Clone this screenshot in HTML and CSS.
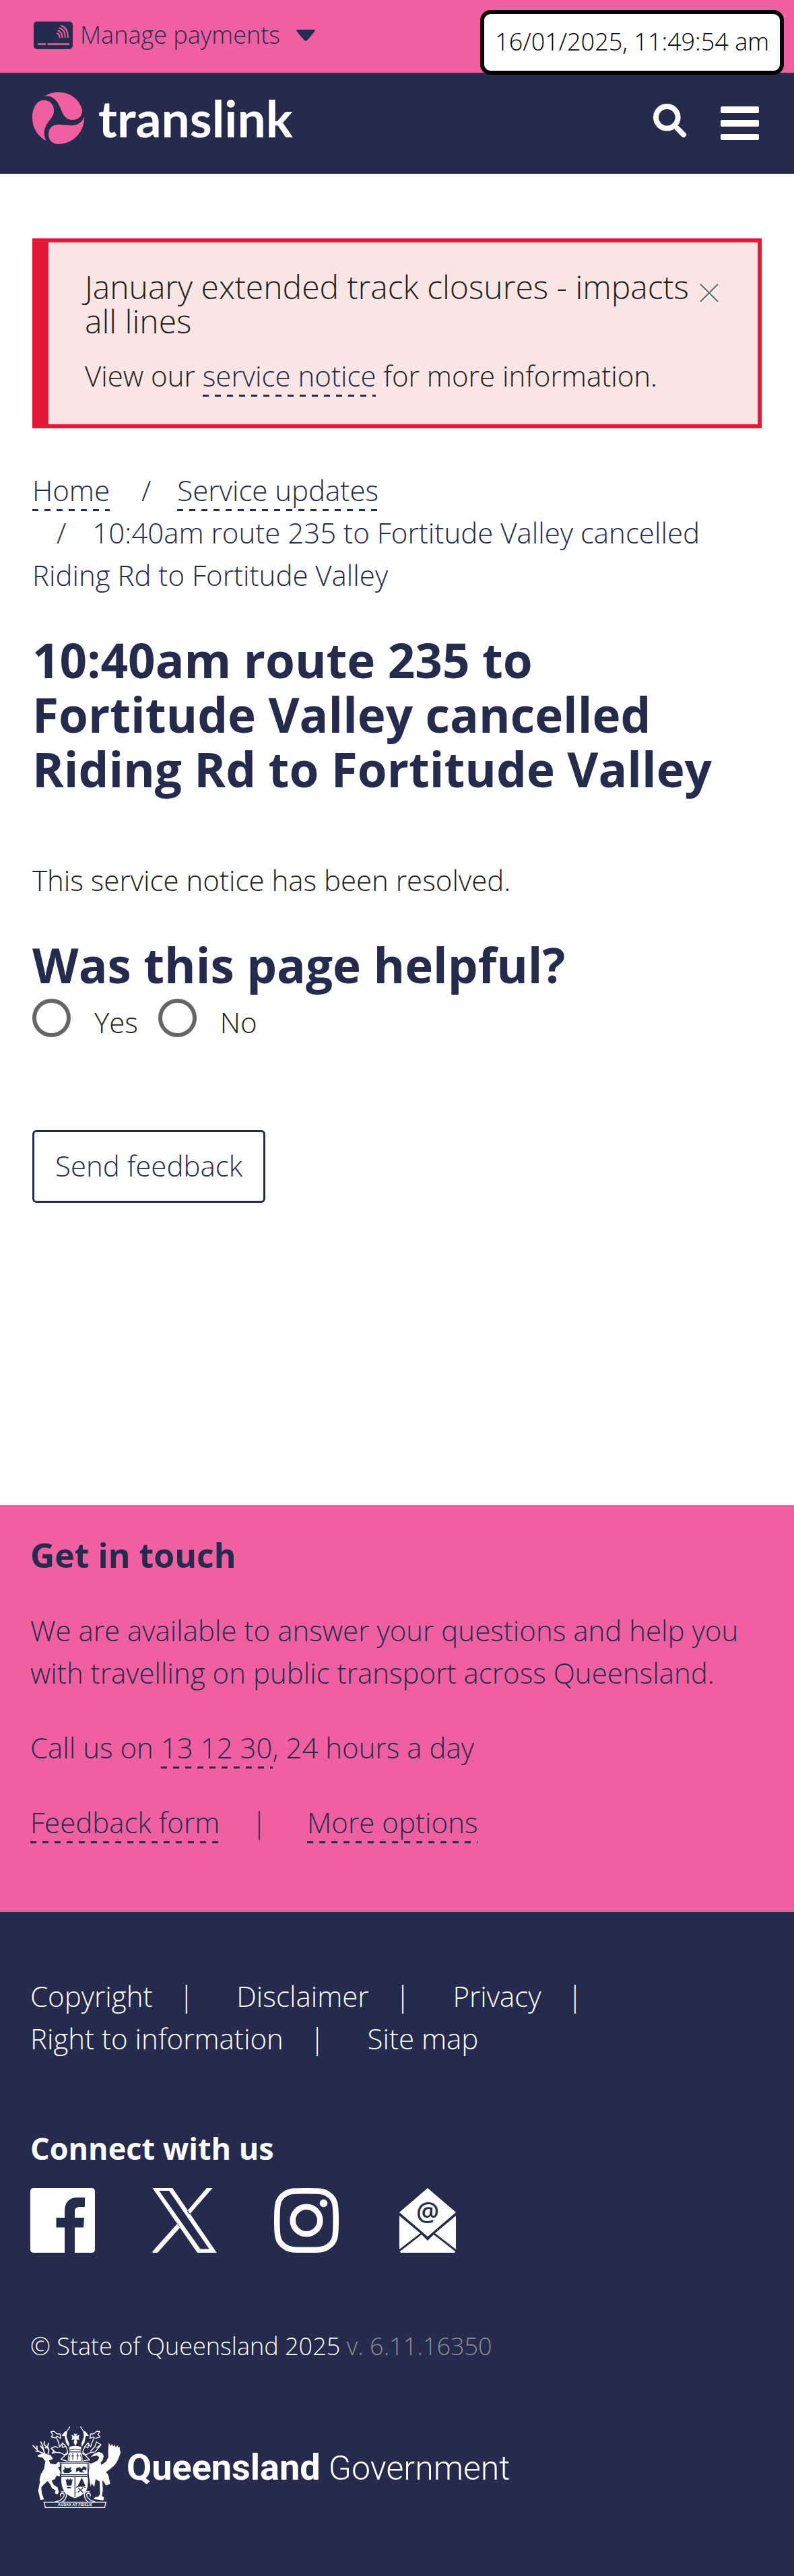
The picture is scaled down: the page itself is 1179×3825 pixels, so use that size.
FILE: index.html
```
<!DOCTYPE html>
<html lang="en-AU">
<head>
<meta charset="utf-8">
<meta name="viewport" content="width=device-width, initial-scale=1">
<title>10:40am route 235 to Fortitude Valley cancelled | Translink</title>
<link rel="stylesheet" href="styles.css">
</head>
<body>
<div class="topbar">
  <button type="button" class="payments" aria-haspopup="true">
    <svg class="payments-card" viewBox="0 0 58 41" aria-hidden="true">
      <rect width="58" height="41" rx="5" fill="#252b4d"/>
      <g fill="none" stroke="#f060a1" stroke-width="2" stroke-linecap="round">
        <path d="M35 17.5q3.5 1.5 3.5 6M36.5 13.5q6 2.5 6 10M38.5 9.5q8.5 3.5 8.5 14M41 6q10 4 10 17.5"/>
        <path stroke-width="2.5" d="M7 33.5h10M21.5 33.5h30.5"/>
      </g>
    </svg>
    <span>Manage payments</span>
    <svg class="payments-caret" viewBox="0 0 28 17" aria-hidden="true"><path d="M2 0h24q3 0 1 3L16 16q-2 1.5-4 0L1 3Q-1 0 2 0z" fill="#252b4d"/></svg>
  </button>
  <time class="timestamp" datetime="2025-01-16T11:49:54">16/01/2025, 11:49:54 am</time>
</div>

<header class="site-header">
  <a class="brand" href="#">
    <svg class="brand-mark" viewBox="0 0 77 77" aria-hidden="true">
      <g fill="#f060a1">
        <path d="M18 6.3C24 1.5 31 0 39 0C57 0 70 11 74 26C74.5 36 68 41 59.500 41C52 41 48 37 45 31C41 22 39 16 34 11C29 6.500 25 5 18 6.300z"/>
        <path d="M17 11.700C26 11.700 32 18 32 27C32 34 29 37 24.500 43C17 53 15.500 60 20.500 72.300C8 65 0 53 0 38C0 24 6 11.700 17 11.700z"/>
        <path d="M77 36.500C78 59 60 77 39 77C30 77 24 71 24 63C24 53 30 48 39 48C47 48 54 50 61 49C69 48 74 44 77 36.500z"/>
      </g>
    </svg>
    <span class="brand-name">translink</span>
  </a>
  <nav class="tools" aria-label="Site tools">
    <button type="button" class="tool" aria-label="Search">
      <svg class="tool-search" viewBox="0 0 50 54"><circle cx="20.300" cy="20.300" r="16.300" fill="none" stroke="#fff" stroke-width="8"/><path d="M36 37l9 9" stroke="#fff" stroke-width="8" stroke-linecap="round"/></svg>
    </button>
    <button type="button" class="tool" aria-label="Menu">
      <svg class="tool-menu" viewBox="0 0 57 54" fill="#fff"><rect y="4" width="57" height="10" rx="2"/><rect y="24" width="57" height="10" rx="2"/><rect y="45" width="57" height="9" rx="2"/></svg>
    </button>
  </nav>
</header>

<main class="content">
  <section class="alert" aria-label="Alert">
    <div class="alert-head">
      <h2 class="alert-title">January extended track closures - impacts all lines</h2>
      <button type="button" class="alert-close" aria-label="Close">
        <svg viewBox="0 0 28 32" fill="none" stroke-width="2"><path stroke="#fff" d="M1 5l26 26M27 5L1 31"/><path stroke="#666" d="M1 2l26 26M27 2L1 28"/></svg>
      </button>
    </div>
    <p>View our <a class="link" href="#">service notice</a> for more information.</p>
  </section>

  <nav aria-label="Breadcrumb">
    <ol class="breadcrumb">
      <li><a class="link" href="#">Home</a></li>
      <li><a class="link" href="#">Service updates</a></li>
      <li>10:40am route 235 to Fortitude Valley cancelled Riding Rd to Fortitude Valley</li>
    </ol>
  </nav>

  <h1 class="heading">10:40am route 235 to Fortitude Valley cancelled Riding Rd to Fortitude Valley</h1>
  <p class="notice">This service notice has been resolved.</p>

  <form class="feedback">
    <h2 class="heading" id="helpful">Was this page helpful?</h2>
    <div class="choices" role="radiogroup" aria-labelledby="helpful">
      <label class="choice"><input type="radio" name="helpful" value="yes"><span>Yes</span></label>
      <label class="choice"><input type="radio" name="helpful" value="no"><span>No</span></label>
    </div>
    <button type="submit" class="send">Send feedback</button>
  </form>
</main>

<footer>
  <section class="contact">
    <h2 class="contact-title">Get in touch</h2>
    <p>We are available to answer your questions and help you with travelling on public transport across Queensland.</p>
    <p>Call us on <a class="link" href="#">13 12 30</a>, 24 hours a day</p>
    <ul class="piped contact-links">
      <li><a class="link" href="#">Feedback form</a></li>
      <li><a class="link" href="#">More options</a></li>
    </ul>
  </section>

  <section class="legal">
    <ul class="piped legal-links">
      <li><a href="#">Copyright</a></li>
      <li><a href="#">Disclaimer</a></li>
      <li><a href="#">Privacy</a></li>
      <li><a href="#">Right to information</a></li>
      <li><a href="#">Site map</a></li>
    </ul>
    <h2 class="connect-title">Connect with us</h2>
    <ul class="social">
      <li><a href="#" aria-label="Facebook">
        <svg viewBox="0 0 96 96"><path fill="#fff" d="M5 0H91q5 0 5 5V91q0 5-5 5H66V58.500H79L80 44H66V35C66 30 68 28 74 28H81V14H70C58 14 51 21 51 34V44H38.500V58.500H51V96H5q-5 0-5-5V5q0-5 5-5z"/></svg>
      </a></li>
      <li><a href="#" aria-label="X">
        <svg viewBox="0 0 97 98"><path fill="#fff" fill-rule="evenodd" d="M0 0H30.300L97.300 98H68zM10 4L72.500 92.500H86L25 4zM82 0H91L56 40L52.500 35zM0 98H7.500L42 59.500L38 53.500L0 96z"/></svg>
      </a></li>
      <li><a href="#" aria-label="Instagram">
        <svg viewBox="0 0 96 96"><g fill="none" stroke="#fff" stroke-width="8.500"><path d="M48 4.250C66 4.250 73 4 80 9C91 16 91.750 24 91.750 48S91 80 80 87C73 92 66 91.750 48 91.750S23 92 16 87C5 80 4.250 72 4.250 48S5 16 16 9C23 4 30 4.250 48 4.250z"/><circle cx="48" cy="48" r="20.300"/></g><circle cx="73.500" cy="22.500" r="5.800" fill="#fff"/></svg>
      </a></li>
      <li><a href="#" aria-label="Email">
        <svg viewBox="0 0 96 96"><path fill="#fff" d="M47 0L89 36L47 72L5 36zM5 41L36 67L5 91zM89 41L58 67L89 91zM7 96L6 94L38 69L47 78L56 69L88 94L87 96z"/><text class="at" x="47" y="48" text-anchor="middle">@</text></svg>
      </a></li>
    </ul>
    <p class="copyright">© State of Queensland 2025 <span class="version">v. 6.11.16350</span></p>
    <a class="gov" href="#" aria-label="Queensland Government">
      <svg class="gov-crest" viewBox="24 18 393 366" aria-hidden="true">
        <!-- Supporters: red deer and brolga -->
        <path fill="#fff" d="M47 149L68 142L60 138L78 138L92 146L104 148L115 162L112 169L98 171L104 187L128 190L140 178L152 182L150 200L138 200L148 222L160 232L156 240L146 228L148 244L132 240L124 256L110 262L118 280L136 292L142 312L136 324L124 318L128 306L112 296L102 276L92 264L76 278L64 292L66 318L76 346L60 348L50 306L58 268L56 258L62 234L76 210L82 176L70 160L50 156z"/>
        <path fill="none" stroke="#fff" stroke-width="5" stroke-linecap="round" d="M76 142L52 132L27 106M52 132L40 132M46 126L44 108M78 140L70 108L62 90M74 124L60 108M94 144L98 124L92 110L96 96M98 124L76 100L78 88M92 110L82 116"/>
        <path fill="#fff" d="M365 93L372 108L380 98L384 110L392 102L395 114L405 104L406 116L413 110L414 126L418 136L414 146L410 158L404 172L396 186L386 198L368 212L352 224L362 236L371 276L352 284L342 266L336 262L338 306L334 330L344 338L340 350L296 344L304 336L318 334L326 322L324 266L306 256L300 290L288 274L284 290L276 240L270 218L276 180L284 186L296 182L316 172L322 158L312 150L284 156L300 142L320 134L336 140L342 152L338 170L328 182L332 192L352 178L362 158L362 126z"/>
        <!-- Mantling, crest and helmet -->
        <g fill="none" stroke="#fff" stroke-width="4" stroke-linejoin="round">
          <path d="M106 44L120 42L134 54L148 54L150 74L138 66L130 66L140 90L146 112L158 94L174 110L182 134L168 148L150 138L128 136L108 118L126 110L140 116M106 44L116 58L108 68L128 72M108 118L120 132L112 140L134 136M174 110L158 114L156 94"/>
          <path d="M326 44L312 42L296 54L284 54L280 74L296 68L300 70L290 92L284 112L272 94L258 110L248 134L262 148L280 138L304 134L330 102L310 90L302 112L282 132M326 44L316 56L326 68L304 74M330 102L310 116M258 110L272 116L276 94"/>
          <path d="M150 168L172 148L184 140M150 168L170 172L182 178M280 170L258 148L246 140M280 170L258 172L246 178"/>
        </g>
        <path fill="#fff" d="M190 20l4 2l-14 20l-4 24l12 32l-2 14l-12-18l-6-30l-14-2l14-18l10-4zM240 20l-4 2l14 20l4 24l-12 32l2 14l12-18l6-30l14-2l-14-18l-10-4zM188 112q27-10 54 0l-2 22h-50zM182 176q0-30 8-40h50q8 10 8 40z"/>
        <path fill="#fff" d="M208 50l8 6l8-6l-4 14l14-6l-4 12l4 12l-14-4l4 14l-8 16l-8-16l4-14l-14 4l4-12l-4-12l14 6z"/>
        <path fill="none" stroke="#252b4d" stroke-width="3" d="M190 126q25-8 50 0M190 134h50M204 140v30M226 140v30M198 152h12M220 152h12M192 146q-6 14-4 28M238 146q6 14 4 28"/>
        <!-- Shield -->
        <path fill="#fff" stroke="#252b4d" stroke-width="3" d="M147 179H276V202L272 240Q278 296 260 316Q240 334 214 342Q184 332 168 314Q148 290 152 244z"/>
        <path fill="none" stroke="#252b4d" stroke-width="4" d="M152 184H272V236H152zM152 244H270M214 244V336"/>
        <path fill="#252b4d" d="M166 198l8 8h14l10-6l-4 14l8 4l-14 10h-22l-6-10l8-8zM220 206l16-4l6 8l10-12l14 6l-2 14l-10-6l-8 8l12 6h-20l-8-8l-12 6zM172 254l6 6l4-8l6 8l6-8l4 8l6-6l-6 30h-20zM178 290h18v6h-18zM244 248l8 18l8 20h-34l10-20z"/>
        <path fill="none" stroke="#252b4d" stroke-width="4" d="M220 292q20-12 42 2M228 294l22 22M250 294l-24 20"/>
        <!-- Scroll -->
        <g fill="none" stroke="#fff" stroke-width="4">
          <path d="M76 358H352L346 382H82zM126 356Q150 354 164 334Q170 318 156 318Q144 322 152 334M152 312Q176 306 176 330Q172 350 156 358M304 356Q282 354 268 334Q262 318 274 318Q288 322 280 334M280 312Q254 306 256 330Q260 350 274 358"/>
        </g>
        <text class="motto" x="214" y="376" text-anchor="middle">AUDAX AT FIDELIS</text>
      </svg>
      <span class="gov-name"><strong>Queensland</strong> Government</span>
    </a>
  </section>
</footer>
</body>
</html>
```
FILE: styles.css
```
:root {
  --navy: #252b4d;
  --pink: #f060a1;
  --red: #e41937;
  --text: #212121;
}

* {
  box-sizing: border-box;
}

body,
h1,
h2,
p,
ul,
ol {
  margin: 0;
  padding: 0;
}

body {
  font: 300 42px/63px "Open Sans", "Noto Sans", sans-serif;
  color: var(--text);
  background: #fff;
}

ul,
ol {
  list-style: none;
}

button {
  margin: 0;
  padding: 0;
  border: 0;
  background: none;
  font: inherit;
  color: inherit;
  cursor: pointer;
}

svg {
  display: block;
}

a {
  color: inherit;
  text-decoration: none;
}

.link {
  color: var(--navy);
  padding-bottom: 3px;
  background: linear-gradient(90deg, var(--navy) 50%, transparent 50%) 0 100% / 18px 3px repeat-x;
}

/* Top bar */
.topbar {
  position: relative;
  padding: 25px 48px 29px;
  background: var(--pink);
}

.payments {
  display: flex;
  align-items: center;
  color: var(--navy);
  font-size: 36px;
  line-height: 54px;
}

.payments-card {
  width: 58px;
  height: 41px;
  margin: 0 11px 0 2px;
}

.payments-caret {
  width: 28px;
  height: 17px;
  margin-left: 24px;
}

.timestamp {
  position: absolute;
  z-index: 1;
  top: 15px;
  right: 15px;
  padding: 14px 16px 16px;
  border: 6px solid #000;
  border-radius: 15px;
  background: #fff;
  color: #000;
  font-size: 36px;
  line-height: 54px;
}

/* Header */
.site-header {
  display: flex;
  justify-content: space-between;
  align-items: flex-start;
  padding: 29px 52px 44px 48px;
  background: var(--navy);
}

.brand {
  display: flex;
  gap: 21px;
  color: #fff;
}

.brand-mark {
  width: 77px;
  height: 77px;
}

.brand-name {
  font: 700 75px/77px Lato, "Open Sans", sans-serif;
}

.tools {
  display: flex;
  gap: 50px;
  padding-top: 17px;
}

.tool-search {
  width: 50px;
  height: 54px;
}

.tool-menu {
  width: 57px;
  height: 54px;
}

/* Main content */
.content {
  padding: 96px 48px 449px;
}

.alert {
  padding: 40px 58px 41px 54px;
  border: 6px solid var(--red);
  border-left-width: 24px;
  background: #f9e5e4;
}

.alert-head {
  display: flex;
  gap: 13px;
  margin-bottom: 24px;
}

.alert-title {
  flex: 1;
  font-size: 48px;
  font-weight: 300;
  line-height: 51px;
}

.alert-close {
  align-self: flex-start;
  padding-top: 20px;
}

.alert-close svg {
  width: 28px;
  height: 32px;
}

.breadcrumb {
  margin: 60px 0 54px;
  color: var(--navy);
}

.breadcrumb li {
  display: inline-block;
}

.breadcrumb li + li::before {
  content: "/";
  padding: 0 39px 0 36px;
}

.heading {
  color: var(--navy);
  font-size: 71px;
  font-weight: 700;
  line-height: 81px;
}

.notice {
  margin: 93px 0 54px;
}

.choices {
  display: flex;
  gap: 30px;
  margin: 10px 0 129px;
}

.choice {
  display: flex;
  align-items: flex-start;
  gap: 35px;
}

.choice span {
  padding-top: 3px;
}

.choice input {
  appearance: none;
  width: 57px;
  height: 57px;
  margin: 0;
  border: 6px solid #666;
  border-radius: 50%;
  background: #fff;
}

.choice input:checked {
  background: radial-gradient(var(--navy) 50%, #fff 52%);
}

.send {
  padding: 18px 31px 21px;
  border: 3px solid var(--navy);
  border-radius: 6px;
  color: var(--navy);
}

/* Contact */
.contact {
  display: grid;
  gap: 48px;
  padding: 43px 45px 102px;
  background: var(--pink);
  color: var(--navy);
}

.contact-title {
  font-size: 50px;
  font-weight: 700;
  line-height: 63px;
}

.piped {
  display: flex;
  flex-wrap: wrap;
}

.piped li:not(:last-child)::after {
  content: "|";
  padding: 0 63px 0 39px;
}

.contact-links li:not(:last-child)::after {
  padding: 0 60px 0 47px;
}

/* Legal and social */
.legal {
  padding: 93px 45px 101px;
  background: var(--navy);
  color: #fff;
}

.connect-title {
  margin: 100px 0 28px;
  font-size: 45px;
  font-weight: 700;
  line-height: 63px;
}

.social {
  display: flex;
  gap: 85px;
}

.social svg {
  width: 96px;
  height: 96px;
}

.at {
  font: 600 38px "Open Sans", sans-serif;
  fill: var(--navy);
}

.copyright {
  margin: 112px 0 91px;
  font-size: 36px;
  line-height: 54px;
}

.version {
  color: #8e8e8e;
}

.gov {
  display: flex;
  align-items: center;
  gap: 9px;
  width: max-content;
  padding-left: 3px;
}

.gov-crest {
  width: 131px;
  height: 122px;
}

.motto {
  font: 700 17px "Open Sans", sans-serif;
  fill: #fff;
}

.gov-name {
  padding-top: 3px;
  font: 300 50px/60px Roboto, "Open Sans", sans-serif;
}

.gov-name strong {
  font-size: 54px;
  font-weight: 700;
}
```
